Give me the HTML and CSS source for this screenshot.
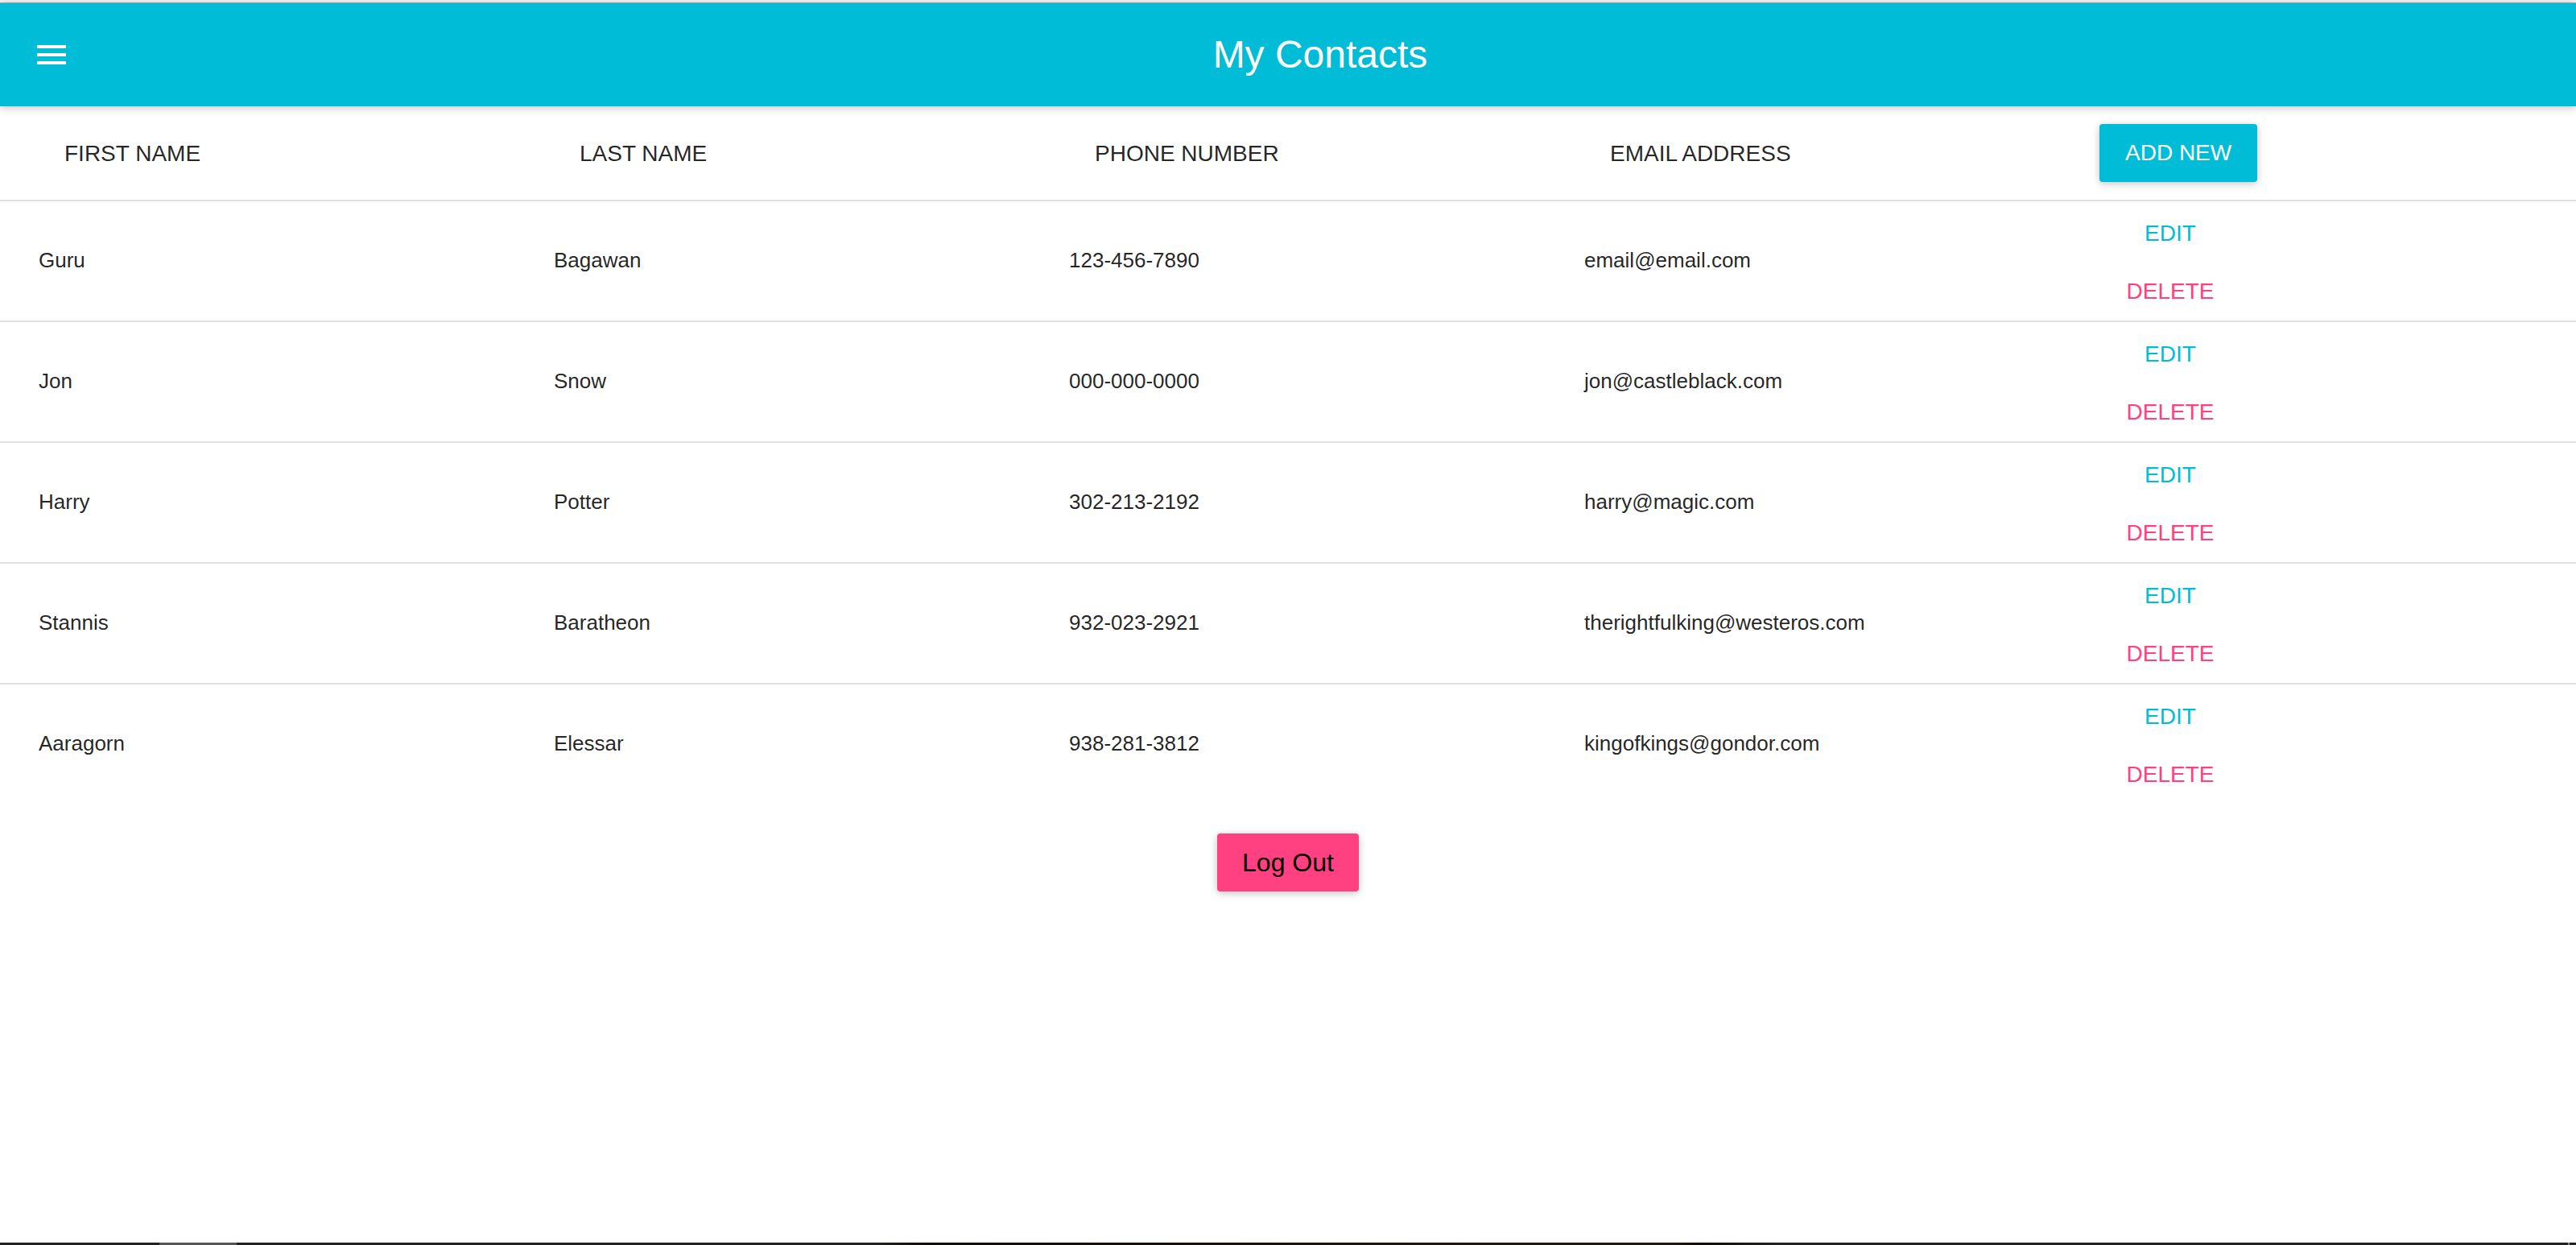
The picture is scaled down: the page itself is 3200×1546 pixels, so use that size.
FILE: index.html
```html
<!DOCTYPE html>
<html lang="en">
<head>
<meta charset="utf-8">
<title>My Contacts</title>
<link rel="stylesheet" href="styles.css">
</head>
<body>
<div class="window-edge"></div>
<header class="app-bar">
  <button class="menu-button" type="button" aria-label="Open menu">
    <svg class="menu-icon" viewBox="0 0 24 24" aria-hidden="true"><path d="M3 18h18v-2H3v2zm0-5h18v-2H3v2zm0-7v2h18V6H3z"/></svg>
  </button>
  <h1 class="title">My Contacts</h1>
</header>
<main class="content">
  <table class="contacts">
    <thead>
      <tr>
        <th scope="col"><span class="label">FIRST NAME</span></th>
        <th scope="col"><span class="label">LAST NAME</span></th>
        <th scope="col"><span class="label">PHONE NUMBER</span></th>
        <th scope="col"><span class="label">EMAIL ADDRESS</span></th>
        <th scope="col"><button class="button raised primary" type="button">ADD NEW</button></th>
      </tr>
    </thead>
    <tbody>
      <tr>
        <td>Guru</td><td>Bagawan</td><td>123-456-7890</td><td>email@email.com</td>
        <td class="action-cell"><div class="actions"><button class="button edit" type="button">EDIT</button><button class="button delete" type="button">DELETE</button></div></td>
      </tr>
      <tr>
        <td>Jon</td><td>Snow</td><td>000-000-0000</td><td>jon@castleblack.com</td>
        <td class="action-cell"><div class="actions"><button class="button edit" type="button">EDIT</button><button class="button delete" type="button">DELETE</button></div></td>
      </tr>
      <tr>
        <td>Harry</td><td>Potter</td><td>302-213-2192</td><td>harry@magic.com</td>
        <td class="action-cell"><div class="actions"><button class="button edit" type="button">EDIT</button><button class="button delete" type="button">DELETE</button></div></td>
      </tr>
      <tr>
        <td>Stannis</td><td>Baratheon</td><td>932-023-2921</td><td>therightfulking@westeros.com</td>
        <td class="action-cell"><div class="actions"><button class="button edit" type="button">EDIT</button><button class="button delete" type="button">DELETE</button></div></td>
      </tr>
      <tr>
        <td>Aaragorn</td><td>Elessar</td><td>938-281-3812</td><td>kingofkings@gondor.com</td>
        <td class="action-cell"><div class="actions"><button class="button edit" type="button">EDIT</button><button class="button delete" type="button">DELETE</button></div></td>
      </tr>
    </tbody>
  </table>
  <button class="button raised secondary" type="button">Log Out</button>
</main>
<footer class="taskbar"><span class="task-active"></span><span class="task-divider"></span></footer>
</body>
</html>
```
FILE: styles.css
```css
* {
  box-sizing: border-box;
}

body {
  display: flex;
  flex-direction: column;
  min-height: 100vh;
  margin: 0;
  background: #fff;
  color: rgba(0, 0, 0, 0.87);
  font-family: "Liberation Sans", Arial, sans-serif;
}

.window-edge {
  height: 4px;
  background: #f1f1f1;
  border-bottom: 1px solid #b0aca8;
}

.app-bar {
  display: flex;
  align-items: center;
  gap: 16px;
  height: 128px;
  padding: 0 48px 0 16px;
  background: #00bcd7;
  color: #fff;
  box-shadow: 0 2px 12px rgba(0, 0, 0, 0.12), 0 2px 8px rgba(0, 0, 0, 0.12);
}

.menu-button {
  width: 96px;
  height: 96px;
  padding: 24px;
  border: 0;
  background: none;
  color: inherit;
}

.menu-icon {
  display: block;
  width: 48px;
  height: 48px;
  fill: currentColor;
}

.title {
  flex: 1;
  margin: 0;
  font-size: 48px;
  font-weight: 400;
  line-height: 126px;
  text-align: center;
}

.content {
  display: flex;
  flex: 1;
  flex-direction: column;
  align-items: center;
  gap: 37px;
}

.contacts {
  width: 100%;
  border-collapse: separate;
  border-spacing: 0;
  table-layout: fixed;
}

.contacts th,
.contacts td {
  padding: 0 48px;
  border-bottom: 2px solid #e0e0e0;
  text-align: left;
  vertical-align: middle;
}

.contacts th {
  height: 118px;
  font-size: 28px;
  font-weight: 400;
}

.contacts td {
  height: 150px;
  padding-bottom: 2px;
  font-size: 26px;
}

.contacts .action-cell {
  padding-top: 4px;
  padding-bottom: 0;
}

.contacts tbody tr:last-child td {
  height: 148px;
  border-bottom: 0;
}

.label {
  display: block;
  padding: 2px 32px 0;
}

.actions {
  display: flex;
  flex-direction: column;
  align-items: flex-start;
}

.button {
  min-width: 176px;
  height: 72px;
  padding: 0 32px;
  border: 0;
  border-radius: 4px;
  background: none;
  font-family: inherit;
  font-size: 28px;
  line-height: 72px;
}

.edit {
  color: #00bcd4;
}

.delete {
  color: #ff4081;
}

.raised {
  box-shadow: 0 2px 12px rgba(0, 0, 0, 0.12), 0 2px 8px rgba(0, 0, 0, 0.12);
}

.primary {
  background: #00bcd7;
  color: #fff;
}

.secondary {
  padding: 0 31px;
  background: #ff4081;
  color: #000;
  font-size: 32px;
}

.taskbar {
  display: flex;
  justify-content: space-between;
  height: 3px;
  padding: 0 8px 0 198px;
  background: linear-gradient(to right, #222 34%, #120a04 36%, #22160c 58%, #22160c 65%, #120a04 66%, #222 69%);
}

.task-active {
  width: 96px;
  background: #555;
}

.task-divider {
  width: 2px;
  background: #888;
}
```
